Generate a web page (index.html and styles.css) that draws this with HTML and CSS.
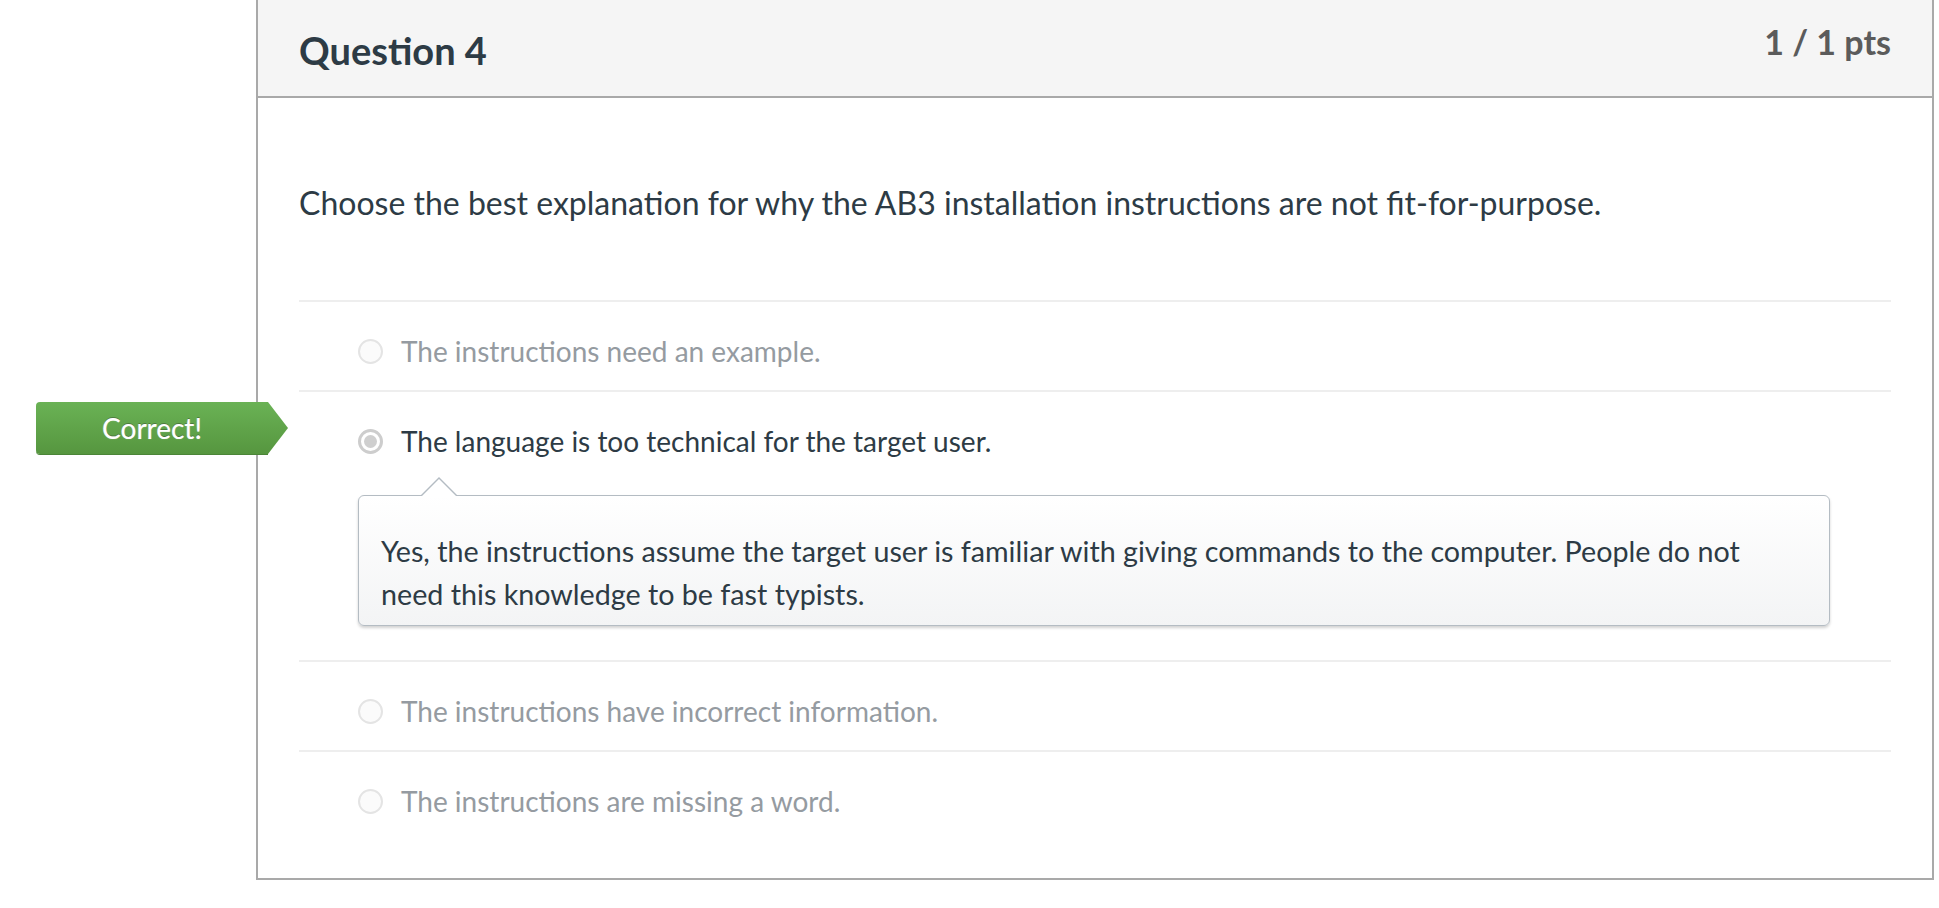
FILE: index.html
```html
<!DOCTYPE html>
<html lang="en">
<head>
<meta charset="utf-8">
<title>Question 4</title>
<link rel="stylesheet" href="styles.css">
</head>
<body>
<div class="card">
  <div class="header">
    <h2 class="title">Question 4</h2>
    <div class="points">1 / 1 pts</div>
  </div>
  <div class="content">
    <p class="question">Choose the best explanation for why the AB3 installation instructions are not fit-for-purpose.</p>
    <div class="answers">
      <div class="answer">
        <div class="answer-line"><span class="radio"></span><span class="answer-text muted">The instructions need an example.</span></div>
      </div>
      <div class="answer selected">
        <div class="badge"><span class="badge-text">Correct!</span></div>
        <div class="answer-line"><span class="radio checked"><span class="dot"></span></span><span class="answer-text">The language is too technical for the target user.</span></div>
        <div class="feedback">
          <p>Yes, the instructions assume the target user is familiar with giving commands to the computer. People do not need this knowledge to be fast typists.</p>
        </div>
      </div>
      <div class="answer">
        <div class="answer-line"><span class="radio"></span><span class="answer-text muted">The instructions have incorrect information.</span></div>
      </div>
      <div class="answer">
        <div class="answer-line"><span class="radio"></span><span class="answer-text muted">The instructions are missing a word.</span></div>
      </div>
    </div>
  </div>
</div>
</body>
</html>
```

FILE: styles.css
```css
* { box-sizing: border-box; }

body {
  margin: 0;
  background: #ffffff;
  font-family: Lato, "Open Sans", "Liberation Sans", sans-serif;
  color: #2d3b45;
}

.card {
  margin-left: 256px;
  width: 1678px;
  border: 2px solid #a9a9a9;
  border-top: none;
}

.header {
  height: 98px;
  background: #f5f5f5;
  border-bottom: 2px solid #a9a9a9;
  padding: 0 41px;
  display: flex;
  justify-content: space-between;
  align-items: flex-start;
}

.title {
  margin: 27px 0 0;
  font-size: 38px;
  line-height: 46px;
  font-weight: 700;
  color: #2d3b45;
}

.points {
  margin-top: 21px;
  font-size: 34px;
  line-height: 41px;
  font-weight: 700;
  color: #5b5b5b;
}

.content {
  padding: 0 41px 38px;
}

.question {
  margin: 81px 0 74px;
  font-size: 32px;
  line-height: 47px;
  color: #2d3b45;
}

.answer {
  position: relative;
  border-top: 2px solid #eeeeee;
  padding: 28px 0 18px 59px;
}

.answer-line {
  display: flex;
  align-items: center;
  gap: 18px;
  height: 42px;
}

.answer-text {
  font-size: 28px;
  line-height: 42px;
  color: #2d3b45;
}

.answer-text.muted {
  color: #959ba1;
}

.radio {
  flex: none;
  width: 25px;
  height: 25px;
  border-radius: 50%;
  border: 2px solid #e4e4e4;
  background: #fbfbfb;
  display: flex;
  align-items: center;
  justify-content: center;
}

.radio.checked {
  border: 3px solid #cdcdcd;
  background: #ffffff;
}

.dot {
  width: 13px;
  height: 13px;
  border-radius: 50%;
  background: #cfcfcf;
}

.badge {
  position: absolute;
  top: 10px;
  left: -263px;
  width: 232px;
  height: 52px;
  border-radius: 4px 0 0 4px;
  background: linear-gradient(#6ab255, #56963f);
  box-shadow: 0 1px 0 #4b8537;
  display: flex;
  align-items: center;
  justify-content: center;
}

.badge::after {
  content: "";
  position: absolute;
  top: 0;
  right: -20px;
  width: 20px;
  height: 52px;
  background: linear-gradient(#6ab255, #56963f);
  clip-path: polygon(0 0, 100% 50%, 0 100%);
}

.badge-text {
  font-size: 28px;
  line-height: 52px;
  color: #ffffff;
  text-shadow: 0 -1px 0 rgba(0, 0, 0, 0.3), 0 0 1px rgba(255, 255, 255, 0.6);
}

.feedback {
  position: relative;
  margin: 33px 61px 16px 0;
  border: 1px solid #b4bcc3;
  border-radius: 6px;
  background: linear-gradient(#ffffff, #f3f4f5);
  box-shadow: 0 2px 3px rgba(0, 0, 0, 0.18);
  padding: 34px 40px 9px 22px;
}

.feedback::before {
  content: "";
  position: absolute;
  top: -19px;
  left: 62px;
  border-left: 18px solid transparent;
  border-right: 18px solid transparent;
  border-bottom: 18px solid #b4bcc3;
}

.feedback::after {
  content: "";
  position: absolute;
  top: -17px;
  left: 63px;
  border-left: 17px solid transparent;
  border-right: 17px solid transparent;
  border-bottom: 17px solid #ffffff;
}

.feedback p {
  margin: 0;
  font-size: 28.7px;
  line-height: 43px;
  color: #2d3b45;
}
```
